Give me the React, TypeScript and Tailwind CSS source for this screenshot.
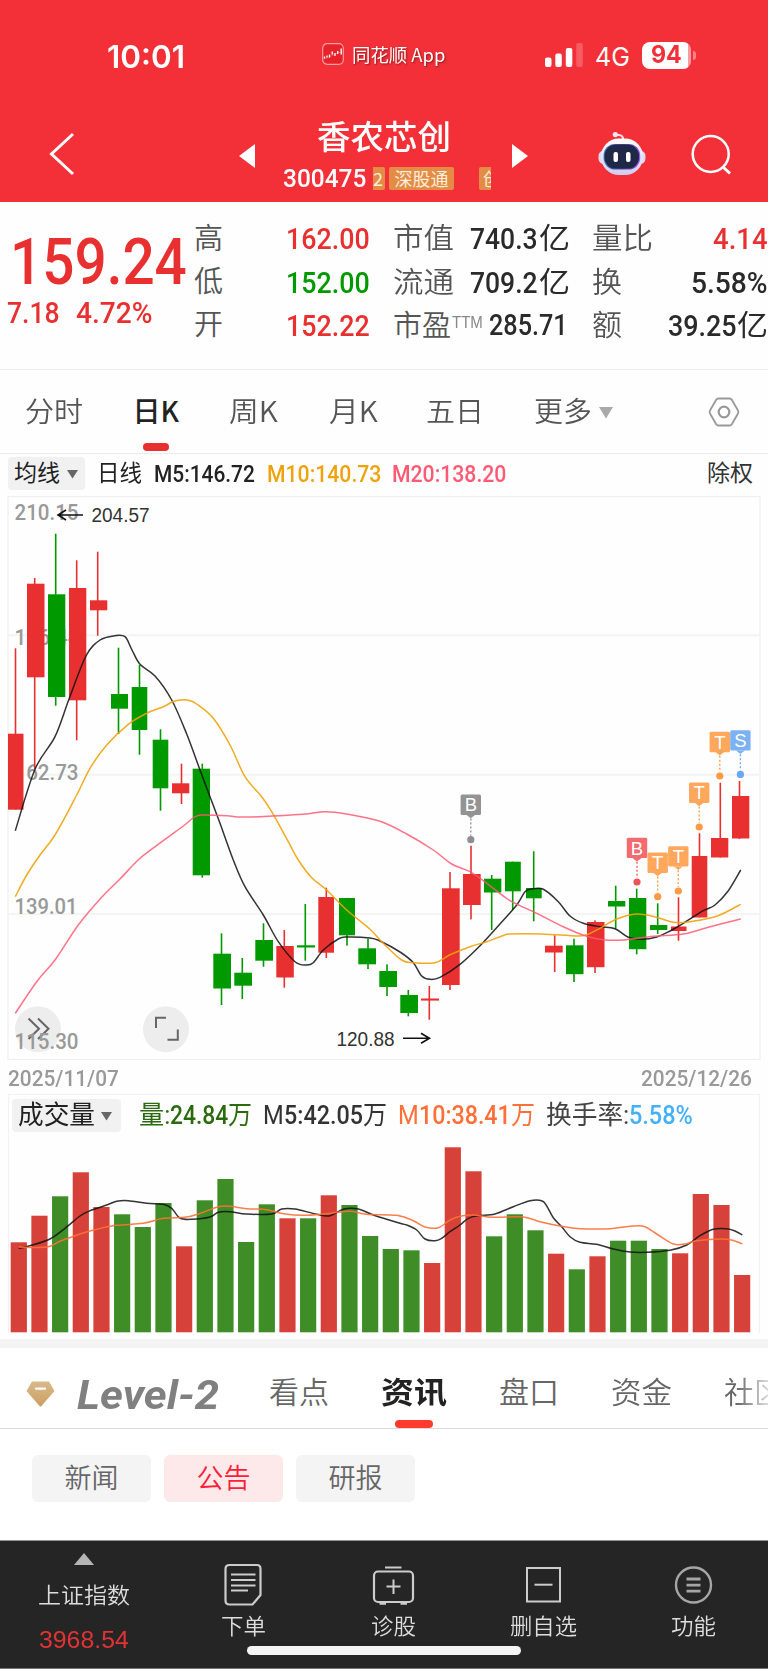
import { useLayoutEffect, useRef, useState } from "react";
import type { ReactNode } from "react";

/** Single-line text stretched or squeezed horizontally to fill the width given by `className`. */
function Fit({ className, children }: { className: string; children: ReactNode }) {
  const outer = useRef<HTMLSpanElement>(null);
  const inner = useRef<HTMLSpanElement>(null);
  const [scale, setScale] = useState(1);
  useLayoutEffect(() => {
    if (outer.current && inner.current && inner.current.offsetWidth > 0) {
      setScale(outer.current.getBoundingClientRect().width / inner.current.offsetWidth);
    }
  }, []);
  return (
    <span ref={outer} className={`block shrink-0 ${className}`}>
      <span ref={inner} className="inline-block origin-left whitespace-nowrap" style={{ transform: `scaleX(${scale})` }}>
        {children}
      </span>
    </span>
  );
}

type Pt = [number, number];

/** Catmull-Rom spline through the points. */
function smooth(p: Pt[]): string {
  let d = `M${p[0][0]} ${p[0][1]}`;
  for (let i = 0; i < p.length - 1; i++) {
    const a = p[Math.max(0, i - 1)];
    const b = p[i];
    const c = p[i + 1];
    const e = p[Math.min(p.length - 1, i + 2)];
    d += `C${b[0] + (c[0] - a[0]) / 6} ${b[1] + (c[1] - a[1]) / 6} ${c[0] - (e[0] - b[0]) / 6} ${c[1] - (e[1] - b[1]) / 6} ${c[0]} ${c[1]}`;
  }
  return d;
}

const RED = "#e93030";
const GREEN = "#009900";

// colour, left, right, wick x, high, body top, body bottom, low
const candles: [string, number, number, number, number, number, number, number][] = [
  ["r", 8, 23.5, 15.5, 648.3, 733.7, 809.7, 809.7],
  ["r", 27, 44.5, 34.7, 578, 583.7, 677.3, 769],
  ["g", 48, 65.3, 55.7, 533.7, 594.3, 697, 705.7],
  ["r", 69, 86.3, 76.7, 560.3, 588, 700.3, 740.3],
  ["r", 90, 107.3, 97.7, 551.7, 600.3, 610.3, 635.7],
  ["g", 111, 128, 118.5, 647.7, 694, 708.7, 734],
  ["g", 131.7, 147.3, 139.5, 665, 687, 730, 754.7],
  ["g", 152.7, 168.3, 160.5, 729.3, 739.7, 788.3, 810.7],
  ["r", 172, 189.3, 181.5, 763.7, 783.3, 793.3, 804],
  ["g", 192.7, 210, 202.3, 763.7, 768.7, 875.3, 877.7],
  ["g", 213.3, 231, 221.5, 933.3, 953.7, 988.5, 1005],
  ["g", 234.3, 252, 242.3, 958, 972.7, 985.7, 999],
  ["g", 255.3, 273, 263.5, 923.3, 940, 960.7, 966.7],
  ["r", 276.3, 293.8, 284.3, 930, 946, 977.5, 987.7],
  ["g", 297, 315, 305.3, 904, 945.3, 947.5, 960.7],
  ["r", 318.3, 334, 326.3, 887.7, 897, 952.7, 958],
  ["g", 339, 355, 347, 898, 898, 935.3, 945.7],
  ["g", 358.3, 376, 368, 938.7, 948.3, 964.3, 969],
  ["g", 379.3, 397, 387, 964.3, 971, 987, 996],
  ["g", 400.3, 418, 408.3, 990, 995, 1013, 1016.3],
  ["r", 421, 439, 429.3, 986, 998.5, 1000.6, 1019.7],
  ["r", 442, 459.7, 450, 872, 888.3, 985, 990],
  ["r", 463, 480.7, 471, 845.7, 874, 905, 919.3],
  ["g", 484, 501.3, 491.7, 875, 878.7, 892.5, 930],
  ["g", 505, 520.8, 512.7, 861.7, 861.7, 891.3, 909.7],
  ["g", 526, 541.7, 533.7, 851.3, 888, 898.3, 921.3],
  ["r", 545, 562.7, 554.7, 935.3, 945.7, 952.5, 972],
  ["g", 566, 583.5, 574, 938.7, 945.3, 974.2, 982],
  ["r", 587, 604.5, 595, 920.3, 922, 967.2, 973],
  ["g", 608, 625.3, 615.7, 885.7, 901, 906.5, 928.7],
  ["g", 629, 646.3, 636.7, 888.7, 898, 949.2, 954.3],
  ["g", 650, 667.3, 657.7, 903.3, 925, 930, 934],
  ["r", 671, 686.5, 678.5, 897.3, 926.5, 931, 940.7],
  ["r", 691.7, 707.3, 699.5, 833.3, 856, 917.5, 917.5],
  ["r", 711, 728.3, 720.3, 782.7, 838, 857.5, 857.5],
  ["r", 732, 749.3, 739.5, 781, 796, 838.5, 839],
];

const ma5: Pt[] = [[15.3, 830.7], [35, 769.3], [55, 736.7], [69.3, 698.3], [86, 656], [100, 640], [115, 635.7], [125, 636.7], [131.7, 649.3], [140, 664.3], [155, 676], [171.7, 700], [186.7, 734], [200, 770], [210, 796.7], [220, 823.3], [233.3, 860], [245, 886.7], [263.3, 915], [278.3, 941.7], [295, 961.7], [306, 965], [313.3, 962.7], [323.3, 950], [338.3, 939], [346.7, 937], [370, 938], [380, 941], [400, 952], [413.3, 962.7], [421.7, 976], [430, 979.3], [440, 977.3], [460, 964.3], [480, 945.7], [501.7, 922], [516.7, 905], [525, 891.7], [531.7, 889], [543.3, 889.3], [558.3, 901.7], [570, 916], [583.3, 923.3], [600, 926.7], [615, 928.7], [628.3, 937.3], [641.7, 939.3], [656.7, 937], [670, 931], [683.3, 923.3], [703.3, 910.7], [715, 905], [728.3, 890.7], [740.7, 870]];
const ma10: Pt[] = [[15.3, 896.7], [26.7, 875], [40, 855], [55, 835], [76.7, 795], [90, 768.3], [106.7, 745], [128.3, 724.3], [146.7, 713.3], [163.3, 706.7], [173.3, 701.5], [181, 700], [188.3, 700.3], [196.7, 704], [213.3, 718.3], [230, 745], [245, 776.7], [261.7, 796.7], [271.7, 811.7], [288.3, 841.7], [298.3, 860], [311.7, 877.7], [326.7, 890], [346.7, 910], [370, 929.3], [383.3, 943.3], [401.7, 960], [413, 962.7], [435, 962.7], [450, 954.7], [470, 946.7], [486.7, 941.7], [503.3, 935.5], [510, 934], [541.7, 934], [576.7, 936], [586.7, 934.7], [601.7, 927.3], [616.7, 919], [633.3, 914.3], [646.7, 915], [660, 918.3], [673.3, 922.3], [686.7, 922.3], [713.3, 917.3], [726.7, 911.7], [740.7, 904.3]];
const ma20: Pt[] = [[15.3, 1013.3], [36.7, 981.7], [55, 960], [78.3, 925], [101.7, 897.3], [120, 879], [140, 858.3], [163.3, 840.7], [183.3, 826], [195, 816.7], [203.3, 815], [226.7, 815.7], [240, 817], [260, 816.7], [303, 814.3], [325, 811.7], [346.7, 814], [380, 821.3], [406.7, 834], [433.3, 850], [451.7, 864], [470, 871.7], [486.7, 883.3], [506.7, 898.5], [520, 905.7], [536.7, 913.3], [563.3, 926.7], [586.7, 936.3], [603.3, 939.7], [623.3, 940], [653.3, 936.3], [683.3, 934], [710, 926.7], [740.7, 919]];

// letter, centre x, box top, dot y, box colour, dot colour
const markers: [string, number, number, number, string, string][] = [
  ["B", 470.8, 794.5, 839.7, "#939393", "#8f8f8f"],
  ["B", 637, 837.7, 882, "#f36b6e", "#ef5458"],
  ["T", 657.7, 852.5, 896.7, "#ffa75c", "#ff9a44"],
  ["T", 678.3, 846.2, 891, "#ffa75c", "#ff9a44"],
  ["T", 699.2, 782.5, 827, "#ffa75c", "#ff9a44"],
  ["T", 719.8, 731.8, 776, "#ffa75c", "#ff9a44"],
  ["S", 740.4, 730.2, 774.4, "#7cb2f3", "#68a8f5"],
];

const volumes: [string, number][] = [
  ["r", 1242.3], ["r", 1215.7], ["g", 1196.3], ["r", 1172.3], ["r", 1207], ["g", 1214.3],
  ["g", 1227], ["g", 1203], ["r", 1246.3], ["g", 1200.3], ["g", 1179], ["g", 1242],
  ["g", 1204.3], ["r", 1218.3], ["g", 1218.3], ["r", 1195.3], ["g", 1205], ["g", 1236],
  ["g", 1249], ["g", 1250.3], ["r", 1263], ["r", 1147.3], ["r", 1171.3], ["g", 1236.3],
  ["g", 1214.3], ["g", 1230.3], ["r", 1253.7], ["g", 1269.3], ["r", 1256.3], ["g", 1240.7],
  ["g", 1240.7], ["g", 1249], ["r", 1253.3], ["r", 1194], ["r", 1205], ["r", 1275],
];
const vma5: Pt[] = [[18.7, 1248.3], [30, 1245.7], [50, 1239], [65, 1228.3], [80, 1216], [90, 1210.7], [106.7, 1205], [116.7, 1201.3], [128.3, 1200.7], [146.7, 1203.3], [163.3, 1204.3], [171.7, 1208.3], [180, 1218], [191.7, 1219.3], [210, 1217], [218.3, 1212.3], [230, 1211.7], [246.7, 1214], [271.7, 1214], [281.7, 1209], [295, 1209], [316.7, 1214.3], [330, 1215.7], [343.3, 1209.3], [358.3, 1209], [373.3, 1215], [400, 1223.3], [406.7, 1225], [416.7, 1230], [425, 1239], [435, 1240.7], [441.7, 1238.3], [450, 1231.7], [460, 1225], [468.3, 1218.3], [478.3, 1215.7], [495, 1214], [513.3, 1206.7], [530, 1200.7], [541.7, 1200.7], [546.7, 1206], [553.3, 1217.7], [561.7, 1226.7], [570, 1236.7], [580, 1242.3], [596.7, 1244.3], [613.3, 1249], [630, 1252], [646.7, 1252.3], [670, 1250.3], [686.7, 1245], [700, 1235.7], [713.3, 1229.3], [726.7, 1228.7], [735, 1231], [742.3, 1235]];
const vma10: Pt[] = [[18.7, 1247], [46.7, 1247], [60, 1241.3], [80, 1234], [96.7, 1229.3], [116.7, 1225.3], [143.3, 1223.3], [163.3, 1218.3], [186.7, 1217], [203.3, 1212.3], [218.3, 1206.7], [230, 1206.3], [246.7, 1208.7], [266.7, 1209.7], [283.3, 1213.7], [303.3, 1215.3], [326.7, 1213.7], [350, 1211.3], [366.7, 1214.3], [396.7, 1215.3], [413.3, 1220.7], [425, 1227], [438.3, 1227.7], [450, 1220], [460, 1216.3], [473.3, 1215], [493.3, 1217.3], [523.3, 1217], [540, 1221.7], [560, 1226], [580, 1228.7], [610, 1228.7], [633.3, 1226], [645, 1226.7], [656.7, 1234], [673.3, 1244], [686.7, 1243.7], [696.7, 1240.7], [726.7, 1239.3], [742.3, 1243.7]];

const NUM = "font-['Roboto','Noto_Sans_CJK_SC',sans-serif] font-medium";

function StatusBar() {
  return (
    <div className="flex h-[110px] items-center pl-[107px] text-white">
      <Fit className="mt-[4px] w-[78px] font-['Inter',sans-serif] text-[31px] leading-[32px] font-semibold">10:01</Fit>
      <div className="ml-[137px] mt-[-2px] flex w-[124px] items-center gap-[8px]">
        <svg className="h-[22px] w-[22px] shrink-0" viewBox="0 0 22 22">
          <rect x="0.7" y="0.7" width="20.6" height="20.6" rx="4.5" fill="#e8222b" stroke="#fff" strokeOpacity="0.55" strokeWidth="1.2" />
          <path d="M2.5 13.5v2M5 12.5v2M7.5 11.5v3M10.2 8.5v3M13 10v3M15.7 8v3M19.2 5.5v6" stroke="#fff" strokeWidth="1.3" />
          <path d="M1.5 16Q8 14 11 12T20 9" stroke="#fff" strokeOpacity="0.4" strokeWidth="0.6" fill="none" />
        </svg>
        <Fit className="w-[93px] font-['Noto_Sans_CJK_SC',sans-serif] text-[18px] leading-[24px] font-normal [text-shadow:1px_1px_2px_rgba(60,0,0,0.55)]">
          同花顺 App
        </Fit>
      </div>
      <svg className="ml-[99px] h-[26px] w-[38px] shrink-0" viewBox="0 0 38 26">
        <rect x="0" y="15.500" width="6.500" height="9.500" rx="2" fill="#fff" />
        <rect x="10.300" y="11.500" width="6.500" height="13.500" rx="2" fill="#fff" />
        <rect x="20.800" y="6" width="6.500" height="19" rx="2" fill="#fff" />
        <rect x="31.300" y="1" width="6.500" height="24" rx="2" fill="#fff" fillOpacity="0.22" />
      </svg>
      <Fit className="ml-[12px] mt-[4px] w-[35px] font-['Inter',sans-serif] text-[25px] leading-[26px]">4G</Fit>
      <div className="ml-[12px] flex h-[27px] w-[49px] items-center justify-center rounded-[8px] bg-[linear-gradient(90deg,#fff_0_94%,#f99ca0_94%)]">
        <Fit className="w-[31px] font-['Inter',sans-serif] text-[24px] leading-[26px] font-bold text-[#f33038]">94</Fit>
      </div>
      <div className="ml-[2px] h-[9px] w-[3px] rounded-r-full bg-white/40" />
    </div>
  );
}

function Robot() {
  return (
    <svg className="h-[46px] w-[48px] shrink-0" viewBox="0 0 48 46">
      <defs>
        <linearGradient id="shell" x1="0" y1="0" x2="0" y2="1">
          <stop offset="0" stopColor="#fff" />
          <stop offset="1" stopColor="#cfcdf0" />
        </linearGradient>
        <linearGradient id="visor" x1="0" y1="0" x2="1" y2="0">
          <stop offset="0" stopColor="#4a86d0" />
          <stop offset="0.5" stopColor="#4a3f96" />
          <stop offset="1" stopColor="#9a5be8" />
        </linearGradient>
      </defs>
      <path d="M25 10V8Q24.500 4.700 18 4.700" stroke="#f3dbe6" strokeWidth="2" fill="none" />
      <circle cx="17.300" cy="4.600" r="2.600" fill="#f5e4ee" />
      <rect x="0.500" y="20.500" width="47" height="13.500" rx="5.500" fill="#dcdaf6" />
      <rect x="3" y="8.500" width="42" height="36.500" rx="18" fill="url(#shell)" />
      <rect x="5.500" y="14" width="36.700" height="25.500" rx="11.500" fill="url(#visor)" />
      <rect x="6.500" y="14.800" width="34.500" height="23.800" rx="11" fill="#202848" />
      <rect x="15.500" y="22" width="4.500" height="10" rx="2" fill="#fff" />
      <rect x="28" y="22" width="4.500" height="10" rx="2" fill="#fff" />
    </svg>
  );
}

function TitleBar() {
  return (
    <div className="flex h-[92px] items-center text-white">
      <svg className="ml-[48px] mt-[-4px] h-[44px] w-[28px] shrink-0" viewBox="0 0 28 44" fill="none" stroke="#fff" strokeWidth="3">
        <path d="M25 2L3.500 22L25 42" />
      </svg>
      <svg className="ml-[163px] mt-[-1px] h-[24px] w-[16px] shrink-0" viewBox="0 0 16 24">
        <path d="M16 0V24L0 12Z" fill="#fff" />
      </svg>
      <div className="ml-[28px] flex w-[208px] flex-col self-start">
        <Fit className="ml-[34px] mt-[5px] w-[134px] font-['Noto_Sans_CJK_SC',sans-serif] text-[33px] leading-[40px] font-medium">香农芯创</Fit>
        <div className="mt-[11px] flex h-[24px] items-center">
          <Fit className={`w-[83px] text-[26.500px] leading-[24px] ${NUM}`}>300475</Fit>
          <div className="ml-[7px] flex h-[23px] w-[118px] gap-[4px] overflow-hidden font-['Noto_Sans_CJK_SC',sans-serif] text-[18px] leading-[23px] text-[#fdeedd]">
            <div className="w-[12px] shrink-0 rounded-r-[2px] bg-[#e48c45]">2</div>
            <div className="w-[65px] shrink-0 rounded-[2px] bg-[#e48c45] text-center">深股通</div>
            <div className="ml-[21px] w-[65px] shrink-0 rounded-[2px] bg-[#e48c45] pl-[4px] whitespace-nowrap">创</div>
          </div>
        </div>
      </div>
      <svg className="ml-[21px] mt-[-1px] h-[24px] w-[16px] shrink-0" viewBox="0 0 16 24">
        <path d="M0 0V24L16 12Z" fill="#fff" />
      </svg>
      <div className="ml-[70px] mt-[-6px] flex">
        <Robot />
      </div>
      <svg className="ml-[44px] mt-[-3px] h-[44px] w-[44px] shrink-0" viewBox="0 0 44 44" fill="none" stroke="#fff" strokeWidth="2.500">
        <circle cx="20.700" cy="21" r="18" />
        <path d="M32.500 33.500L40 40.500" strokeWidth="3" />
      </svg>
    </div>
  );
}

const LABEL = "font-['Noto_Sans_CJK_SC',sans-serif] text-[29px] leading-[43px] font-[350] text-[#555]";

function Quote() {
  return (
    <div className="flex h-[168px] border-b border-[#ececec] pt-[15px]">
      <div className="w-[194px] shrink-0">
        <Fit className={`ml-[10px] mt-[12px] w-[177px] text-[65px] leading-[66px] text-[#e93030] ${NUM}`}>159.24</Fit>
        <div className={`ml-[7px] mt-[2px] flex text-[30px] leading-[32px] text-[#e93030] ${NUM}`}>
          <Fit className="w-[53px]">7.18</Fit>
          <Fit className="ml-[16px] w-[77px]">4.72%</Fit>
        </div>
      </div>
      <div className="mt-[-2px] w-[28px] shrink-0">
        <Fit className={`w-[29px] ${LABEL}`}>高</Fit>
        <Fit className={`w-[29px] ${LABEL}`}>低</Fit>
        <Fit className={`w-[29px] ${LABEL}`}>开</Fit>
      </div>
      <div className={`ml-[64px] w-[84px] shrink-0 text-[30px] leading-[43.500px] text-[#e93030] ${NUM}`}>
        <Fit className="w-[84px]">162.00</Fit>
        <Fit className="w-[84px] text-[#009900]">152.00</Fit>
        <Fit className="w-[84px]">152.22</Fit>
      </div>
      <div className="ml-[23px] w-[178px] shrink-0 text-[#2a2a2a]">
        {[["市值", "740.3"], ["流通", "709.2"]].map(([k, v]) => (
          <div key={k} className="flex">
            <Fit className={`mt-[-2px] w-[61px] ${LABEL}`}>{k}</Fit>
            <Fit className={`ml-[16px] w-[68px] text-[30px] leading-[43.500px] ${NUM}`}>{v}</Fit>
            <Fit className="mt-[-2px] ml-px w-[31px] font-['Noto_Sans_CJK_SC',sans-serif] text-[29px] leading-[43px]">亿</Fit>
          </div>
        ))}
        <div className="flex">
          <Fit className={`mt-[-2px] w-[58px] ${LABEL}`}>市盈</Fit>
          <Fit className="ml-px w-[31px] pt-[9px] font-['Liberation_Sans',sans-serif] text-[16px] leading-[20px] text-[#888]">TTM</Fit>
          <Fit className={`mt-[-1px] ml-[6px] w-[79px] text-[30px] leading-[43px] ${NUM}`}>285.71</Fit>
        </div>
      </div>
      <div className="ml-[21px] grow text-[#2a2a2a]">
        <div className="flex justify-between">
          <Fit className={`mt-[-2px] w-[61px] ${LABEL}`}>量比</Fit>
          <Fit className={`w-[55px] text-[30px] leading-[43.500px] text-[#e93030] ${NUM}`}>4.14</Fit>
        </div>
        <div className="flex justify-between">
          <Fit className={`mt-[-2px] w-[30px] ${LABEL}`}>换</Fit>
          <Fit className={`w-[77px] text-[30px] leading-[43.500px] ${NUM}`}>5.58%</Fit>
        </div>
        <div className="flex">
          <Fit className={`mt-[-2px] w-[30px] ${LABEL}`}>额</Fit>
          <Fit className={`ml-[46px] w-[69px] text-[30px] leading-[43.500px] ${NUM}`}>39.25</Fit>
          <Fit className="mt-[-2px] w-[31px] font-['Noto_Sans_CJK_SC',sans-serif] text-[29px] leading-[43px]">亿</Fit>
        </div>
      </div>
    </div>
  );
}

function PeriodTabs() {
  return (
    <div className="flex h-[84px] border-b border-[#ececec] pt-[18px] font-['Noto_Sans_CJK_SC',sans-serif] text-[28px] leading-[44px] font-[350] text-[#555]">
      <Fit className="ml-[25px] w-[58px]">分时</Fit>
      <div className="ml-[50px] flex w-[46px] flex-col items-center">
        <Fit className="w-[47px] font-medium text-[#222]">日K</Fit>
        <div className="mt-[11px] h-[8px] w-[26px] rounded-full bg-[#e93030]" />
      </div>
      <Fit className="ml-[50px] w-[49px]">周K</Fit>
      <Fit className="ml-[51px] w-[49px]">月K</Fit>
      <Fit className="ml-[48px] w-[58px]">五日</Fit>
      <Fit className="ml-[50px] w-[58px]">更多</Fit>
      <svg className="ml-[7px] mt-[19px] h-[12px] w-[14px]" viewBox="0 0 14 12">
        <path d="M0 0H14L7 11.500Z" fill="#a9a9a9" />
      </svg>
      <svg className="ml-[95px] mt-[9px] h-[30px] w-[32px]" viewBox="0 0 32 30" fill="none" stroke="#999" strokeWidth="1.800" strokeLinejoin="round">
        <path d="M10.500 1.500H21.500Q23 1.500 23.800 2.800L30 13.500Q30.800 15 30 16.500L23.800 27.200Q23 28.500 21.500 28.500H10.500Q9 28.500 8.200 27.200L2 16.500Q1.200 15 2 13.500L8.200 2.800Q9 1.500 10.500 1.500Z" />
        <circle cx="16" cy="15" r="5.300" strokeWidth="2.200" />
      </svg>
    </div>
  );
}

function Caret() {
  return (
    <svg className="mt-[2px] h-[9px] w-[11px]" viewBox="0 0 11 9">
      <path d="M0 0H11L5.500 8.500Z" fill="#666" />
    </svg>
  );
}

function AverageRow() {
  return (
    <div className={`flex h-[42px] items-start pt-[3px] pl-[8px] text-[24px] leading-[34px] ${NUM}`}>
      <div className="flex h-[33px] w-[77px] items-center gap-[7px] rounded-[4px] bg-[#f1f1f2] pl-[6px] font-normal text-[#222]">
        <Fit className="w-[46px] text-[23px]">均线</Fit>
        <Caret />
      </div>
      <Fit className="ml-[12px] w-[45px] text-[23px] font-normal text-[#222]">日线</Fit>
      <Fit className="ml-[12px] w-[101px] text-[#222]">M5:146.72</Fit>
      <Fit className="ml-[12px] w-[114px] text-[#f0a20c]">M10:140.73</Fit>
      <Fit className="ml-[11px] w-[114px] text-[#ff5a73]">M20:138.20</Fit>
      <Fit className="ml-[201px] w-[46px] text-[23px] font-normal text-[#333]">除权</Fit>
    </div>
  );
}

function PriceChart() {
  return (
    <svg className="block h-[568px] w-[768px]" viewBox="0 495 768 568">
      <rect x="8" y="496.500" width="752" height="563" fill="none" stroke="#efefef" strokeWidth="1.200" />
      <path d="M8 635.300H760M8 774.700H760M8 914H760" stroke="#f4f4f5" strokeWidth="2" />
      <circle cx="38" cy="1029.300" r="23" fill="#ededed" />
      <circle cx="166" cy="1029.300" r="23" fill="#ededed" />
      <path d="M28.500 1018.500L39 1028.700L28.500 1039M38 1018.500L48.500 1028.700L38 1039M156 1028V1017.800H166M167.500 1039.800H177.800V1029.500" fill="none" stroke="#666" strokeWidth="2" />
      <g fill="#999" className="font-['Roboto',sans-serif] text-[22.500px] font-medium">
        <text x="14.500" y="520" textLength="64" lengthAdjust="spacingAndGlyphs">210.15</text>
        <text x="14.500" y="645" textLength="65" lengthAdjust="spacingAndGlyphs">186.44</text>
        <text x="14.500" y="779.500" textLength="64" lengthAdjust="spacingAndGlyphs">162.73</text>
        <text x="14.500" y="914" textLength="63" lengthAdjust="spacingAndGlyphs">139.01</text>
        <text x="14.500" y="1048.500" textLength="64" lengthAdjust="spacingAndGlyphs">115.30</text>
      </g>
      {candles.map(([c, l, r, w, hi, t, b, lo]) => (
        <g key={w} fill={c === "r" ? RED : GREEN}>
          <rect x={w - 0.8} y={hi} width="1.600" height={lo - hi} />
          <rect x={l} y={t} width={r - l} height={b - t} />
        </g>
      ))}
      <path d={smooth(ma5)} fill="none" stroke="#111" strokeOpacity="0.85" strokeWidth="1.500" />
      <path d={smooth(ma10)} fill="none" stroke="#f0a20c" strokeOpacity="0.9" strokeWidth="1.500" />
      <path d={smooth(ma20)} fill="none" stroke="#ff5a73" strokeOpacity="0.85" strokeWidth="1.500" />
      <g fill="none" stroke="#111" strokeWidth="1.600">
        <path d="M83 515H58M66 510L58 515L66 520" />
        <path d="M403 1038.300H429M421 1033.300L429.500 1038.300L421 1043.300" />
      </g>
      <g fill="#333" className="font-['Liberation_Sans',sans-serif] text-[19.500px]">
        <text x="91.500" y="522" textLength="58" lengthAdjust="spacingAndGlyphs">204.57</text>
        <text x="336.500" y="1045.800" textLength="58" lengthAdjust="spacingAndGlyphs">120.88</text>
      </g>
      {markers.map(([ch, x, t, dy, box, dot]) => (
        <g key={x}>
          <rect x={x - 10.2} y={t} width="20.400" height="20.400" rx="1.500" fill={box} />
          <path d={`M${x - 4.5} ${t + 20.2}h9l-4.5 3.500z`} fill={box} />
          <path d={`M${x} ${t + 24}V${dy - 4}`} stroke={dot} strokeWidth="1.300" strokeDasharray="2 2" />
          <circle cx={x} cy={dy} r="3.600" fill={dot} />
          <text x={x} y={t + 16.9} textAnchor="middle" fill="#fff" className="font-['Liberation_Sans',sans-serif] text-[18.500px]">
            {ch}
          </text>
        </g>
      ))}
    </svg>
  );
}

function Volume() {
  return (
    <div className="mx-[8px] h-[239px] border-x border-t border-[#f1f1f1]">
      <div className={`flex h-[40px] items-start pt-[4px] pl-[3px] text-[26px] leading-[32px] ${NUM}`}>
        <div className="flex h-[33px] w-[109px] items-center gap-[6px] rounded-[4px] bg-[#f1f1f2] pl-[6px] font-normal text-[#222]">
          <Fit className="w-[77px] leading-[35px]">成交量</Fit>
          <Caret />
        </div>
        <Fit className="ml-[18px] w-[31px] font-normal text-[#2c6a10]">量:</Fit>
        <Fit className="w-[58px] text-[#2c6a10]">24.84</Fit>
        <Fit className="w-[24px] font-normal text-[#2c6a10]">万</Fit>
        <Fit className="ml-[11px] w-[21px] font-normal text-[#333]">M</Fit>
        <Fit className="w-[79px] text-[#333]">5:42.05</Fit>
        <Fit className="w-[24px] font-normal text-[#333]">万</Fit>
        <Fit className="ml-[11px] w-[21px] font-normal text-[#ff6f37]">M</Fit>
        <Fit className="w-[92px] text-[#ff6f37]">10:38.41</Fit>
        <Fit className="w-[24px] font-normal text-[#ff6f37]">万</Fit>
        <Fit className="ml-[11px] w-[83px] font-normal text-[#444]">换手率:</Fit>
        <Fit className="w-[64px] text-[#42b0fb]">5.58%</Fit>
      </div>
      <svg className="block h-[198px] w-[750px]" viewBox="9 1135 750 198">
        {volumes.map(([c, top], i) => (
          <rect key={i} x={10.7 + i * 20.667} y={top} width="16.200" height={1332.3 - top} fill={c === "r" ? "#d64239" : "#3e8d27"} />
        ))}
        <path d={smooth(vma5)} fill="none" stroke="#111" strokeOpacity="0.85" strokeWidth="1.500" />
        <path d={smooth(vma10)} fill="none" stroke="#ff7038" strokeOpacity="0.9" strokeWidth="1.500" />
      </svg>
    </div>
  );
}

function SectionTabs() {
  return (
    <div className="flex h-[81px] overflow-hidden border-b border-[#dcdcdc] bg-white pt-[20px] font-['Noto_Sans_CJK_SC',sans-serif] text-[30px] leading-[44px] font-[350] text-[#666]">
      <svg className="ml-[26px] mt-[13px] h-[26px] w-[29px] shrink-0" viewBox="0 0 29 26">
        <defs>
          <linearGradient id="gem" x1="0" y1="0" x2="0" y2="1">
            <stop offset="0" stopColor="#d9b98a" />
            <stop offset="1" stopColor="#cba063" />
          </linearGradient>
        </defs>
        <path d="M6 0.500H23L28.500 10L15.500 25Q14.500 26 13.500 25L0.500 10Z" fill="url(#gem)" />
        <rect x="9" y="6.500" width="11" height="2.300" rx="0.800" fill="#fff" />
      </svg>
      <Fit className="ml-[22px] mt-[2px] w-[142px] font-['Roboto',sans-serif] text-[41px] leading-[50px] font-bold text-[#808080] italic">Level-2</Fit>
      <Fit className="ml-[50px] w-[60px]">看点</Fit>
      <div className="ml-[52px] flex w-[65px] shrink-0 flex-col items-center">
        <Fit className="w-[66px] font-bold text-[#222]">资讯</Fit>
        <div className="mt-[8px] h-[8px] w-[38px] shrink-0 rounded-full bg-[#ff3b30]" />
      </div>
      <Fit className="ml-[53px] w-[60px]">盘口</Fit>
      <Fit className="ml-[52px] w-[61px]">资金</Fit>
      <Fit className="ml-[52px] w-[60px] [mask-image:linear-gradient(90deg,#000_20%,#0002_80%)]">社区</Fit>
    </div>
  );
}

function Chips() {
  return (
    <div className="flex h-[111px] gap-[13px] bg-white pt-[26px] pl-[32px] font-['Noto_Sans_CJK_SC',sans-serif] text-[27px] leading-[44px] font-[350]">
      <div className="h-[47px] w-[119px] rounded-[6px] bg-[#f4f4f4] text-center text-[#666]">新闻</div>
      <div className="h-[47px] w-[119px] rounded-[6px] bg-[#fee9ea] text-center text-[#ff2038]">公告</div>
      <div className="h-[47px] w-[119px] rounded-[6px] bg-[#f4f4f4] text-center text-[#666]">研报</div>
    </div>
  );
}

function NavItem({ label, width, children }: { label: string; width: string; children: ReactNode }) {
  return (
    <div className="flex w-[150px] shrink-0 flex-col items-center pt-[20px]">
      <svg className="h-[48px] w-[48px]" viewBox="0 0 48 48" fill="none" stroke="#ccc" strokeWidth="2">
        {children}
      </svg>
      <Fit className={`mt-[-1px] ${width}`}>{label}</Fit>
    </div>
  );
}

function BottomBar() {
  return (
    <div className="relative flex h-[129px] border-y border-t-[#8f9696] border-b-[#777] bg-[#252525] font-['Noto_Sans_CJK_SC',sans-serif] text-[22px] leading-[32px] font-[350] text-[#ddd]">
      <div className="flex w-[168px] shrink-0 flex-col items-center pt-[12px]">
        <svg className="h-[12px] w-[20px]" viewBox="0 0 20 12">
          <path d="M10 0L20 12H0Z" fill="#b5b5b5" />
        </svg>
        <Fit className="mt-[12px] w-[92px]">上证指数</Fit>
        <Fit className="mt-[15px] w-[90px] font-['Liberation_Sans',sans-serif] text-[24px] font-normal text-[#e23232]">3968.54</Fit>
      </div>
      <NavItem label="下单" width="w-[45px]">
        <path d="M10.500 4H38Q41.500 4 41.500 8V34L33.500 43.500H10.500Q6.500 43.500 6.500 39.500V8Q6.500 4 10.500 4Z" strokeWidth="2.200" />
        <path d="M12 13.500H36.500M12 19H36.500M12 24.500H36.500M12 29.500H29" strokeWidth="2.200" />
      </NavItem>
      <NavItem label="诊股" width="w-[45px]">
        <rect x="5" y="10.500" width="39" height="30.500" rx="4" strokeWidth="2.200" />
        <path d="M16 6.500H32.500M10.500 42.800H17M31.500 42.800H38M24.500 18.500V33M17.500 25.500H31.500" />
      </NavItem>
      <NavItem label="删自选" width="w-[67px]">
        <rect x="8" y="7" width="33" height="33.500" />
        <path d="M15.500 23.700H33.500" />
      </NavItem>
      <NavItem label="功能" width="w-[45px]">
        <circle cx="24.500" cy="24" r="17.500" stroke="#a5a5a5" strokeWidth="2.400" />
        <path d="M17.500 18H31.500M17.500 24.200H31.500M17.500 30.200H31.500" stroke="#a5a5a5" strokeWidth="2.800" />
      </NavItem>
      <div className="absolute top-[105px] left-[247px] h-[9px] w-[274px] rounded-full bg-[#f4f4f4]" />
    </div>
  );
}

export default function App() {
  return (
    <div className="h-[1669px] w-[768px] overflow-hidden bg-[#fefefe]">
      <div className="h-[202px] bg-[#f33038]">
        <StatusBar />
        <TitleBar />
      </div>
      <Quote />
      <PeriodTabs />
      <AverageRow />
      <div className="mt-[-1px]">
        <PriceChart />
      </div>
      <div className={`flex h-[31px] justify-between pr-[16px] pl-[8px] text-[22.500px] leading-[31px] text-[#999] ${NUM}`}>
        <Fit className="w-[111px]">2025/11/07</Fit>
        <Fit className="w-[111px]">2025/12/26</Fit>
      </div>
      <Volume />
      <div className="mt-[6px] h-[9px] bg-[#f4f4f4]" />
      <SectionTabs />
      <Chips />
      <BottomBar />
    </div>
  );
}
